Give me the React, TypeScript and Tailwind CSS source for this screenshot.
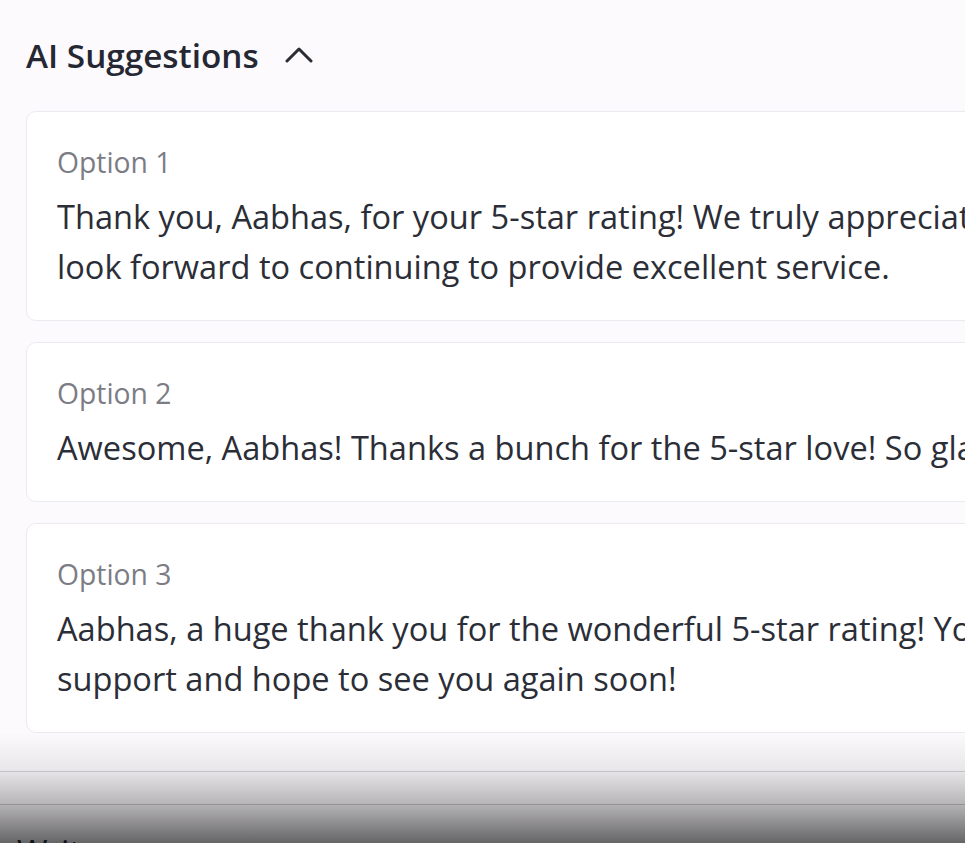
import React from "react";

const options = [
  {
    label: "Option 1",
    lines: [
      "Thank you, Aabhas, for your 5-star rating! We truly appreciate your kind words and",
      "look forward to continuing to provide excellent service.",
    ],
  },
  {
    label: "Option 2",
    lines: [
      "Awesome, Aabhas! Thanks a bunch for the 5-star love! So glad you enjoyed it!",
    ],
  },
  {
    label: "Option 3",
    lines: [
      "Aabhas, a huge thank you for the wonderful 5-star rating! Your feedback means a lot. We appreciate your",
      "support and hope to see you again soon!",
    ],
  },
];

function ChevronUp() {
  return (
    <svg width="28" height="16" viewBox="0 0 28 16" fill="none" className="text-[#2a2d36]">
      <path d="M2 14 L14 2 L26 14" stroke="currentColor" strokeWidth="3" strokeLinecap="round" strokeLinejoin="round" />
    </svg>
  );
}

export default function App() {
  return (
    <div
      className="relative w-[965px] h-[843px] overflow-hidden bg-[#fcfafd]"
      style={{ fontFamily: '"Open Sans", "Noto Sans", sans-serif' }}
    >
      <div className="pl-[26px] pt-[30px]">
        <div className="flex items-center gap-[26px] h-[50px]">
          <h2 className="text-[33.3px] font-semibold text-[#252833] leading-[50px]">AI Suggestions</h2>
          <ChevronUp />
        </div>
        <div className="mt-[31px] flex flex-col gap-[21px] w-[1400px]">
          {options.map((o) => (
            <div
              key={o.label}
              className="rounded-[10px] border border-[#ebeaf0] bg-white pl-[30px] pt-[34px] pb-[28px]"
            >
              <div className="text-[28.3px] leading-[32px] text-[#7b7c84]">{o.label}</div>
              <div className="mt-[14px] text-[32.6px] leading-[50px] text-[#2b2e37] whitespace-nowrap">
                {o.lines.map((l, i) => (
                  <div key={i}>{l}</div>
                ))}
              </div>
            </div>
          ))}
        </div>
        <div className="mt-[38px] -ml-[26px] border-t border-[#d6d5db] h-[33px]" />
        <div className="-ml-[26px] border-t border-[#cfcfd4] pl-[17px] pt-[22px] text-[33px] leading-[50px] text-[#2b2e37]">
          Write a response...
        </div>
      </div>
      <div className="pointer-events-none absolute left-0 right-0 bottom-0 h-[111px] bg-[linear-gradient(to_bottom,rgba(0,0,0,0)_0%,rgba(0,0,0,0.08)_34%,rgba(0,0,0,0.27)_64%,rgba(0,0,0,0.6)_100%)]" />
    </div>
  );
}
